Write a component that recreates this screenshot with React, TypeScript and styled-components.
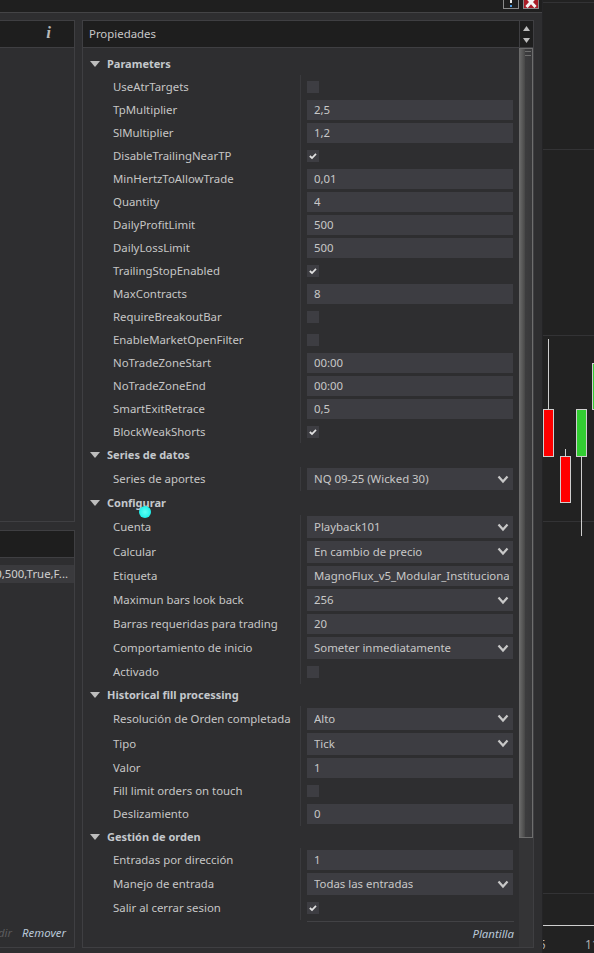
import React from 'react';
import styled, { createGlobalStyle } from 'styled-components';

const GlobalStyle = createGlobalStyle`
  html, body {
    margin: 0;
    padding: 0;
    background: #222222;
  }
  * {
    box-sizing: border-box;
  }
`;

// Layout
const Screen = styled.div`
  width: 594px;
  height: 953px;
  display: flex;
  overflow: hidden;
  position: relative;
  font-family: 'Noto Sans', 'Open Sans', sans-serif;
  font-size: 11.4px;
  color: #c8c8c8;
`;

const Dialog = styled.div`
  width: 543px;
  height: 953px;
  flex: none;
  display: flex;
  flex-direction: column;
  background: #2e2e30;
  border-right: 1px solid #242426;
`;

const TitleBar = styled.div`
  height: 13px;
  flex: none;
  display: flex;
  justify-content: flex-end;
  gap: 4px;
  padding-right: 3px;
  background: #1f1f1f;
  border-bottom: 1px solid #444446;
`;

const TitleButton = styled.div<{ $danger?: boolean }>`
  width: 16px;
  height: 9px;
  display: flex;
  align-items: flex-end;
  justify-content: center;
  overflow: hidden;
  background: ${(p) => (p.$danger ? '#a81c26' : '#1f1f1f')};
  border: 1px solid #8a8a8a;
  border-top: none;
`;

const Columns = styled.div`
  flex: 1;
  min-height: 0;
  display: flex;
  gap: 7px;
  padding: 7px 8px 5px 0;
`;

const LeftColumn = styled.div`
  width: 75px;
  flex: none;
  display: flex;
  flex-direction: column;
  gap: 8px;
`;

const LeftPanel = styled.div<{ $grow?: boolean }>`
  height: ${(p) => (p.$grow ? '418px' : '502px')};
  display: flex;
  flex-direction: column;
  border: 1px solid #3f3f42;
  border-left: none;
`;

const PanelHeader = styled.div`
  height: 27px;
  flex: none;
  display: flex;
  align-items: center;
  background: #1e1e1e;
  border-bottom: 1px solid #3f3f42;
`;

const InfoMark = styled.span`
  margin-left: auto;
  margin-right: 23px;
  margin-bottom: 2px;
  font-family: 'Liberation Serif', serif;
  font-size: 17px;
  font-style: italic;
  font-weight: 700;
  color: #b8b8b8;
`;

const InstanceRow = styled.div`
  height: 18px;
  margin-top: 7px;
  display: flex;
  justify-content: flex-end;
  align-items: center;
  padding-right: 6px;
  padding-bottom: 1px;
  overflow: hidden;
  white-space: nowrap;
  background: #3a3a3d;
  color: #d0d0d0;
`;

const LeftFooter = styled.div`
  margin-top: auto;
  height: 25px;
  display: flex;
  justify-content: flex-end;
  gap: 10px;
  padding: 0 8px 0 0;
  overflow: hidden;
  white-space: nowrap;
  font-style: italic;
  line-height: 22px;
`;

const FooterLink = styled.span<{ $muted?: boolean }>`
  color: ${(p) => (p.$muted ? '#5c5c5e' : '#b9c8d8')};
`;

const RightPanel = styled.div`
  flex: 1;
  min-width: 0;
  display: flex;
  flex-direction: column;
  border: 1px solid #3f3f42;
`;

const PanelTitle = styled.span`
  flex: 1;
  padding-left: 6px;
  padding-bottom: 1px;
  color: #c8c8c8;
`;

const SpinBox = styled.div`
  width: 14px;
  height: 100%;
  display: flex;
  flex-direction: column;
  align-items: center;
  justify-content: center;
  gap: 7px;
  border-left: 1px solid #3f3f42;
`;

const PanelBody = styled.div`
  flex: 1;
  min-height: 0;
  display: flex;
`;

const Content = styled.div`
  flex: 1;
  min-width: 0;
  display: flex;
  flex-direction: column;
  padding-top: 4px;
`;

const Section = styled.div`
  display: flex;
  flex-direction: column;
`;

const SectionHeader = styled.div<{ $h: number }>`
  height: ${(p) => p.$h}px;
  display: flex;
  align-items: center;
  padding-left: 7px;
  padding-bottom: 1px;
  font-size: 11px;
  font-weight: 700;
  color: #c4c8cc;
`;

const Triangle = styled.span`
  width: 0;
  height: 0;
  margin-right: 7px;
  margin-top: 1px;
  border-left: 5px solid transparent;
  border-right: 5px solid transparent;
  border-top: 6px solid #bdbdbd;
`;

const Row = styled.div<{ $h: number }>`
  height: ${(p) => p.$h}px;
  display: flex;
`;

const RowLabel = styled.div`
  width: 217px;
  flex: none;
  display: flex;
  align-items: center;
  padding-left: 30px;
  padding-bottom: 1px;
  white-space: nowrap;
  color: #c6c6c6;
`;

const RowValue = styled.div`
  width: 214px;
  flex: none;
  display: flex;
  align-items: center;
  padding-left: 6px;
  border-left: 1px solid #3a3a3d;
`;

const TextField = styled.div`
  width: 206px;
  height: 20px;
  display: flex;
  align-items: center;
  padding-left: 7px;
  padding-right: 4px;
  padding-bottom: 1px;
  white-space: nowrap;
  background: #3d3d42;
  color: #c8c8c8;
`;

const FieldText = styled.span`
  min-width: 0;
  overflow: hidden;
`;

const SelectField = styled(TextField)`
  height: 22px;
  justify-content: space-between;
  padding-right: 3px;
`;

const CheckBox = styled.div`
  width: 12px;
  height: 12px;
  display: flex;
  align-items: center;
  justify-content: center;
  background: #3d3d42;
`;

const ContentFooter = styled.div`
  margin-top: 1px;
  margin-left: 224px;
  width: 207px;
  border-top: 1px solid #424245;
  padding-top: 4px;
  text-align: right;
  font-style: italic;
  color: #b9c8d8;
`;

const ScrollTrack = styled.div`
  width: 14px;
  flex: none;
  display: flex;
  flex-direction: column;
  background: #343436;
`;

const ScrollThumb = styled.div`
  height: 790px;
  display: flex;
  flex-direction: column;
  gap: 3px;
  padding: 2px 1px 0 6px;
  background: linear-gradient(90deg, #6e6e6e 0%, #4a4a4a 42%, #3c3c3e 50%, #38383a 100%);
  border-right: 1px solid #6e6e6e;
  border-top: 1px solid #6e6e6e;
  border-bottom: 1px solid #6e6e6e;
`;

const GripLine = styled.div`
  height: 1px;
  background: #6e6e6e;
`;

const ChartArea = styled.div`
  flex: 1;
  min-width: 0;
  height: 953px;
  background: #222222;
`;

// Marker left by the screen recorder, lies on top of the dialog
const CursorDot = styled.div`
  position: absolute;
  left: 139px;
  top: 506px;
  width: 12px;
  height: 12px;
  border-radius: 50%;
  background: radial-gradient(circle, #5ffff5 0%, #1ff0ea 70%, #2bd8d8 100%);
`;

const Chevron: React.FC = () => (
  <svg width="14" height="14" viewBox="0 0 14 14" fill="none">
    <path d="M2.5 4.5 L7 9.5 L11.5 4.5" stroke="#c8c8c8" strokeWidth="2.2" />
  </svg>
);

const Check: React.FC = () => (
  <svg width="8" height="8" viewBox="0 0 8 8" fill="none">
    <path d="M0.8 4 L3 6 L7 1.8" stroke="#e2e2e2" strokeWidth="1.7" />
  </svg>
);

type Kind = 'text' | 'select' | 'check';
type Prop = { label: string; kind: Kind; value?: string; checked?: boolean; h?: number };
type Group = { title: string; h: number; props: Prop[] };

const groups: Group[] = [
  {
    title: 'Parameters',
    h: 23,
    props: [
      { label: 'UseAtrTargets', kind: 'check' },
      { label: 'TpMultiplier', kind: 'text', value: '2,5' },
      { label: 'SlMultiplier', kind: 'text', value: '1,2' },
      { label: 'DisableTrailingNearTP', kind: 'check', checked: true },
      { label: 'MinHertzToAllowTrade', kind: 'text', value: '0,01' },
      { label: 'Quantity', kind: 'text', value: '4' },
      { label: 'DailyProfitLimit', kind: 'text', value: '500' },
      { label: 'DailyLossLimit', kind: 'text', value: '500' },
      { label: 'TrailingStopEnabled', kind: 'check', checked: true },
      { label: 'MaxContracts', kind: 'text', value: '8' },
      { label: 'RequireBreakoutBar', kind: 'check' },
      { label: 'EnableMarketOpenFilter', kind: 'check' },
      { label: 'NoTradeZoneStart', kind: 'text', value: '00:00' },
      { label: 'NoTradeZoneEnd', kind: 'text', value: '00:00' },
      { label: 'SmartExitRetrace', kind: 'text', value: '0,5' },
      { label: 'BlockWeakShorts', kind: 'check', checked: true },
    ],
  },
  {
    title: 'Series de datos',
    h: 24,
    props: [{ label: 'Series de aportes', kind: 'select', value: 'NQ 09-25 (Wicked 30)', h: 24 }],
  },
  {
    title: 'Configurar',
    h: 24,
    props: [
      { label: 'Cuenta', kind: 'select', value: 'Playback101', h: 24 },
      { label: 'Calcular', kind: 'select', value: 'En cambio de precio', h: 25 },
      { label: 'Etiqueta', kind: 'text', value: 'MagnoFlux_v5_Modular_Institucional', h: 24 },
      { label: 'Maximun bars look back', kind: 'select', value: '256', h: 24 },
      { label: 'Barras requeridas para trading', kind: 'text', value: '20', h: 24 },
      { label: 'Comportamiento de inicio', kind: 'select', value: 'Someter inmediatamente', h: 24 },
      { label: 'Activado', kind: 'check', h: 24 },
    ],
  },
  {
    title: 'Historical fill processing',
    h: 22,
    props: [
      { label: 'Resolución de Orden completada', kind: 'select', value: 'Alto', h: 25 },
      { label: 'Tipo', kind: 'select', value: 'Tick', h: 25 },
      { label: 'Valor', kind: 'text', value: '1', h: 24 },
      { label: 'Fill limit orders on touch', kind: 'check', h: 22 },
      { label: 'Deslizamiento', kind: 'text', value: '0', h: 24 },
    ],
  },
  {
    title: 'Gestión de orden',
    h: 22,
    props: [
      { label: 'Entradas por dirección', kind: 'text', value: '1', h: 24 },
      { label: 'Manejo de entrada', kind: 'select', value: 'Todas las entradas', h: 24 },
      { label: 'Salir al cerrar sesion', kind: 'check', checked: true, h: 24 },
    ],
  },
];

const PropertyValue: React.FC<{ prop: Prop }> = ({ prop }) => {
  if (prop.kind === 'check') {
    return <CheckBox>{prop.checked && <Check />}</CheckBox>;
  }
  if (prop.kind === 'select') {
    return (
      <SelectField>
        <FieldText>{prop.value}</FieldText>
        <Chevron />
      </SelectField>
    );
  }
  return (
    <TextField>
      <FieldText>{prop.value}</FieldText>
    </TextField>
  );
};

const Candle: React.FC<{ x: number; top: number; bottom: number; wickTop: number; wickBottom: number; fill: string }> = ({
  x,
  top,
  bottom,
  wickTop,
  wickBottom,
  fill,
}) => (
  <g>
    <line x1={x + 5.5} x2={x + 5.5} y1={wickTop} y2={wickBottom} stroke="#cfcfcf" />
    <rect x={x + 0.5} y={top + 0.5} width={10} height={bottom - top} fill={fill} stroke="#cfcfcf" />
  </g>
);

const Chart: React.FC = () => (
  <svg width="51" height="953" viewBox="543 0 51 953">
    {[2, 149, 335, 521, 893].map((y) => (
      <line key={y} x1="543" x2="594" y1={y + 0.5} y2={y + 0.5} stroke="#333335" />
    ))}
    <Candle x={543} top={409} bottom={456} wickTop={339} wickBottom={409} fill="#ff0000" />
    <Candle x={560} top={456} bottom={502} wickTop={449} wickBottom={456} fill="#ff0000" />
    <Candle x={576} top={409} bottom={456} wickTop={456} wickBottom={536} fill="#32cd32" />
    <Candle x={592} top={363} bottom={409} wickTop={363} wickBottom={409} fill="#32cd32" />
    <line x1="543" x2="594" y1="925.5" y2="925.5" stroke="#cfcfcf" />
    <text x="532" y="949" fill="#b8b8b8" fontSize="12" fontFamily="'Open Sans', sans-serif">
      15
    </text>
    <text x="585" y="949" fill="#b8b8b8" fontSize="12" fontFamily="'Open Sans', sans-serif">
      11
    </text>
  </svg>
);

const App: React.FC = () => (
  <Screen>
    <GlobalStyle />
    <Dialog>
      <TitleBar>
        <TitleButton>
          <svg width="4" height="9" viewBox="0 0 4 9">
            <rect x="1" y="0" width="2" height="4" fill="#e8e8e8" />
            <rect x="1" y="6" width="2" height="2" fill="#4a9fe8" />
          </svg>
        </TitleButton>
        <TitleButton $danger>
          <svg width="12" height="9" viewBox="0 0 12 9">
            <path d="M1.5 -2 L10.5 8 M10.5 -2 L1.5 8" stroke="#f4f4f4" strokeWidth="3" />
          </svg>
        </TitleButton>
      </TitleBar>
      <Columns>
        <LeftColumn>
          <LeftPanel>
            <PanelHeader>
              <InfoMark>i</InfoMark>
            </PanelHeader>
          </LeftPanel>
          <LeftPanel $grow>
            <PanelHeader />
            <InstanceRow>0,500,True,F...</InstanceRow>
            <LeftFooter>
              <FooterLink $muted>Añadir</FooterLink>
              <FooterLink>Remover</FooterLink>
            </LeftFooter>
          </LeftPanel>
        </LeftColumn>
        <RightPanel>
          <PanelHeader>
            <PanelTitle>Propiedades</PanelTitle>
            <SpinBox>
              <svg width="7" height="5" viewBox="0 0 7 5">
                <path d="M3.5 0 L7 5 L0 5 Z" fill="#bdbdbd" />
              </svg>
              <svg width="7" height="5" viewBox="0 0 7 5">
                <path d="M0 0 L7 0 L3.5 5 Z" fill="#bdbdbd" />
              </svg>
            </SpinBox>
          </PanelHeader>
          <PanelBody>
            <Content>
              {groups.map((group) => (
                <Section key={group.title}>
                  <SectionHeader $h={group.h}>
                    <Triangle />
                    {group.title}
                  </SectionHeader>
                  {group.props.map((prop) => (
                    <Row key={prop.label} $h={prop.h ?? 23}>
                      <RowLabel>{prop.label}</RowLabel>
                      <RowValue>
                        <PropertyValue prop={prop} />
                      </RowValue>
                    </Row>
                  ))}
                </Section>
              ))}
              <ContentFooter>Plantilla</ContentFooter>
            </Content>
            <ScrollTrack>
              <ScrollThumb>
                <GripLine />
                <GripLine />
              </ScrollThumb>
            </ScrollTrack>
          </PanelBody>
        </RightPanel>
      </Columns>
    </Dialog>
    <ChartArea>
      <Chart />
    </ChartArea>
    <CursorDot />
  </Screen>
);

export default App;
